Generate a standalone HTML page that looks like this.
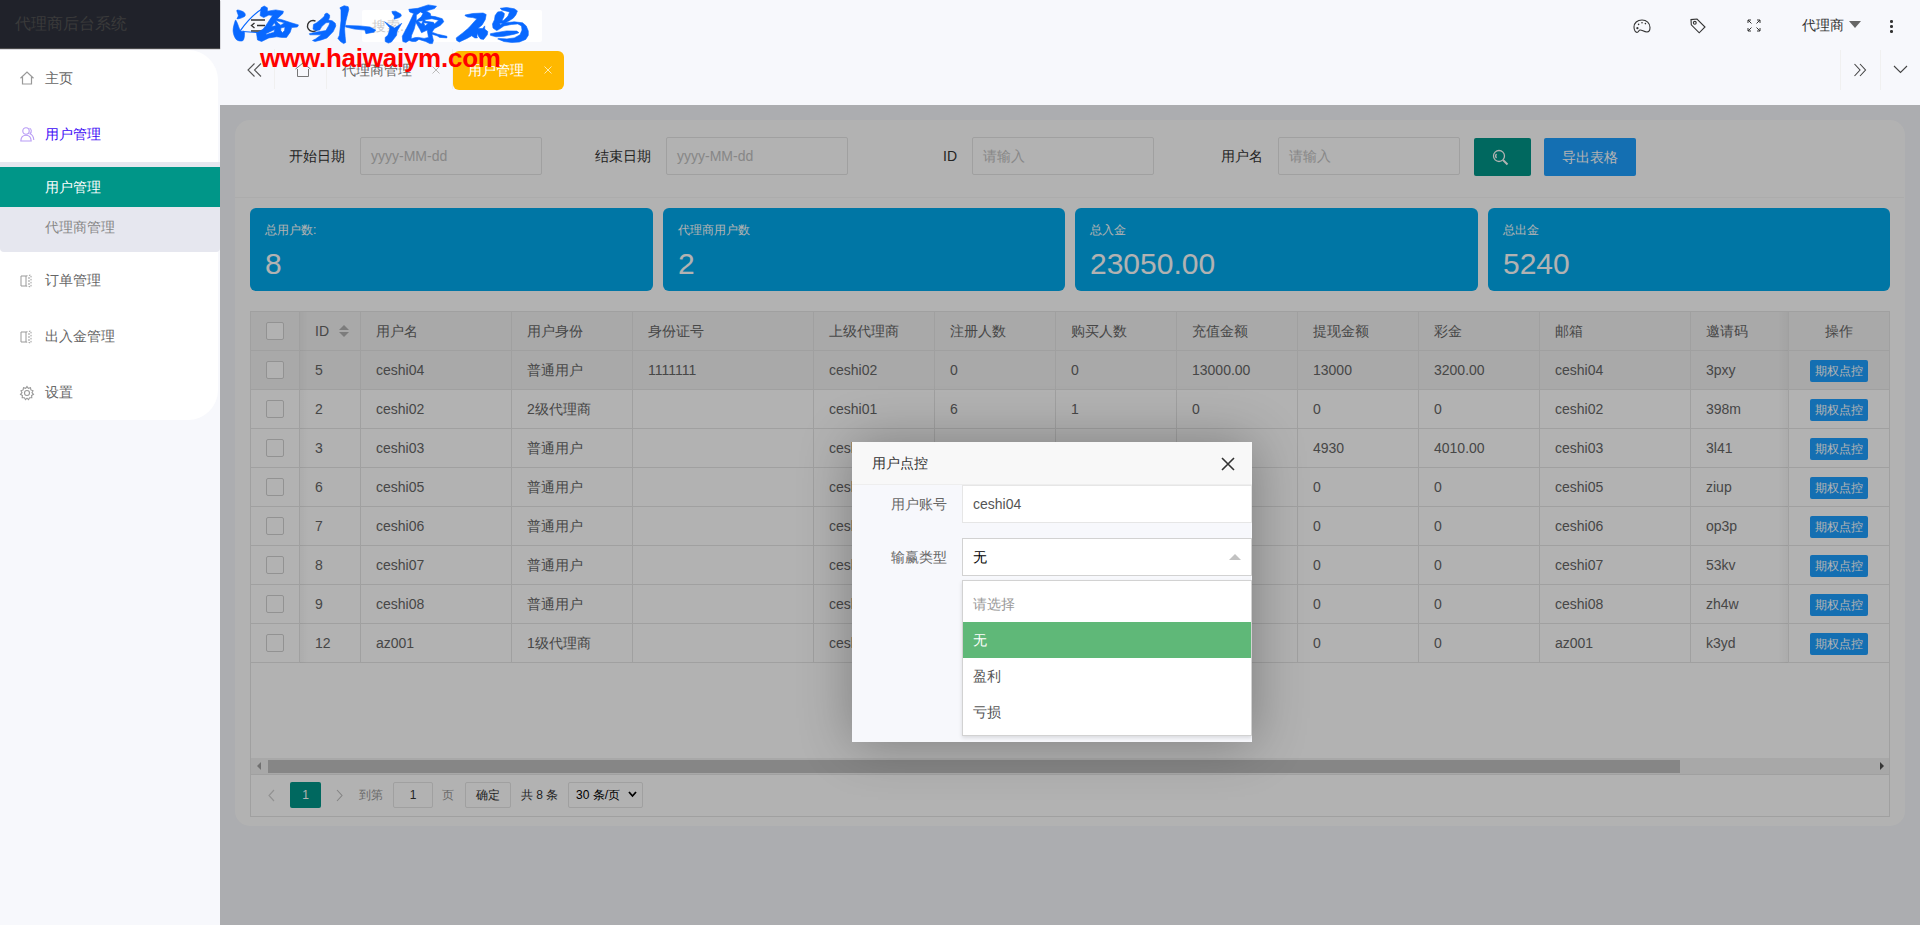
<!DOCTYPE html>
<html><head><meta charset="utf-8">
<style>
*{box-sizing:border-box;margin:0;padding:0}
html,body{width:1920px;height:925px;overflow:hidden}
body{position:relative;background:#f7f8fc;font-family:"Liberation Sans",sans-serif;font-size:14px;color:#333}
.a{position:absolute;white-space:nowrap}
#logo{left:0;top:0;width:220px;height:48px;background:#20222a;box-shadow:0 1px 1px rgba(0,0,0,.7)}
#logo span{position:absolute;left:15px;top:13px;font-size:16px;line-height:22px;color:#3a3a3a;font-weight:500}
#menu{left:0;top:50px;width:218px;height:370px;background:#fff;border-radius:0 30px 30px 0}
.mi{position:absolute;left:45px;font-size:14px;color:#666;line-height:20px}
#sub{left:0;top:162px;width:220px;height:90px;background:#e6e7ef;border-radius:0 0 4px 4px}
#subact{left:0;top:167px;width:220px;height:40px;background:#009688}
#main{left:220px;top:105px;width:1700px;height:820px;background:#f7f8fc}
#card{left:235px;top:120px;width:1670px;height:706px;background:#fff;border-radius:15px}
.lbl{font-size:14px;color:#333;line-height:20px}
.inp{height:38px;border:1px solid #e6e6e6;background:#fff;border-radius:2px;color:#c2c2c2;font-size:14px;line-height:36px;padding-left:10px}
.stat{top:208px;height:83px;background:#01aaed;border-radius:6px;color:#fff}
.stat .t{position:absolute;left:15px;top:13px;font-size:12px;line-height:18px}
.stat .v{position:absolute;left:15px;top:36px;font-size:30px;line-height:40px}
.hl{left:251px;width:1638px;height:1px;background:#e6e6e6}
.vl{top:312px;width:1px;height:350px;background:#e6e6e6}
.th,.td{font-size:14px;color:#666;line-height:20px}
.cb{width:18px;height:18px;border:1px solid #d2d2d2;background:#fff;border-radius:2px}
.btn{width:58px;height:22px;background:#1e9fff;color:#fff;font-size:12px;line-height:22px;text-align:center;border-radius:2px}
#shade{left:220px;top:105px;width:1700px;height:820px;background:rgba(0,0,0,.3)}
.sep{width:1px;height:40px;background:#f0f0f0}
svg{position:absolute;overflow:visible}
</style></head><body>
<div class="a" id="logo"><span>代理商后台系统</span></div>
<div class="a" id="menu"></div>
<div class="a" id="sub"></div>
<div class="a" id="subact"></div>
<div class="a mi" style="top:68px">主页</div>
<div class="a mi" style="top:124px;color:#3c0af5">用户管理</div>
<div class="a mi" style="top:177px;color:#fff">用户管理</div>
<div class="a mi" style="top:217px;color:#888">代理商管理</div>
<div class="a mi" style="top:270px">订单管理</div>
<div class="a mi" style="top:326px">出入金管理</div>
<div class="a mi" style="top:382px">设置</div>
<!-- sidebar icons -->
<svg style="left:19px;top:70px" width="16" height="16" viewBox="0 0 16 16"><path d="M1.5 8.2 L8 2 L14.5 8.2 M3.5 7 V14 H12.5 V7" fill="none" stroke="#999" stroke-width="1.2"/></svg>
<svg style="left:20px;top:126px" width="16" height="16" viewBox="0 0 16 16"><g fill="none" stroke="#b89cf5" stroke-width="1.1"><circle cx="6" cy="5" r="3.2"/><path d="M0.8 15 C1 11 3 9.2 6 9.2 C9 9.2 11 11 11.2 15 Z"/><path d="M9.5 2.2 C11.5 2.6 12 6 10 7.8 C12.5 8.8 13.6 11 13.8 14"/></g></svg>
<svg style="left:19px;top:273px" width="16" height="16" viewBox="0 0 16 16"><g fill="none" stroke="#999" stroke-width="1"><path d="M2 3 H7 V13 H2 Z"/><path d="M7 3 L12 2 V14 L7 13" stroke-dasharray="1.5 1.5"/><path d="M9 5 H11 M9 8 H11 M9 11 H11"/></g></svg>
<svg style="left:19px;top:329px" width="16" height="16" viewBox="0 0 16 16"><g fill="none" stroke="#999" stroke-width="1"><path d="M2 3 H7 V13 H2 Z"/><path d="M7 3 L12 2 V14 L7 13" stroke-dasharray="1.5 1.5"/><path d="M9 5 H11 M9 8 H11 M9 11 H11"/></g></svg>
<svg style="left:19px;top:385px" width="16" height="16" viewBox="0 0 16 16"><g fill="none" stroke="#999" stroke-width="1.1"><circle cx="8" cy="8" r="2.5"/><path d="M8 1.5 L9.3 3.3 L11.5 2.7 L11.9 4.9 L14 5.7 L13 7.7 L14.5 9.3 L12.6 10.5 L12.8 12.7 L10.6 12.8 L9.5 14.7 L8 13.2 L6.5 14.7 L5.4 12.8 L3.2 12.7 L3.4 10.5 L1.5 9.3 L3 7.7 L2 5.7 L4.1 4.9 L4.5 2.7 L6.7 3.3 Z"/></g></svg>

<!-- header -->
<svg style="left:250px;top:19px" width="16" height="13" viewBox="0 0 16 13"><g fill="none" stroke="#333" stroke-width="1.4"><path d="M1 1 H15 M7 6.5 H15 M1 12 H15"/><path d="M4.5 4 L1.5 6.5 L4.5 9"/></g></svg>
<svg style="left:306px;top:19px" width="14" height="14" viewBox="0 0 14 14"><path d="M12.5 7 A5.5 5.5 0 1 1 9.5 2.1" fill="none" stroke="#333" stroke-width="1.4"/></svg>
<div class="a" style="left:362px;top:10px;width:180px;height:32px;background:#fff;border-radius:2px"></div>
<div class="a" style="left:372px;top:16px;font-size:14px;line-height:20px;color:#ccc">搜索...</div>

<svg style="left:1633px;top:19px" width="18" height="15" viewBox="0 0 18 15"><g fill="none" stroke="#333" stroke-width="1.1"><path d="M9 1 C4.2 1 1 4 1 8 C1 11.5 2.6 13.4 4 13.4 C5.8 13.4 5.4 11 7.2 11 C9.4 11 10.8 13 14 13 C16 13 17 11 17 8.6 C17 4.2 13.6 1 9 1 Z"/></g><g fill="#333"><circle cx="4.4" cy="9.2" r="1.1"/><circle cx="5.6" cy="5.4" r="0.8"/><circle cx="9" cy="3.8" r="0.8"/><circle cx="12.4" cy="4.6" r="0.8"/></g></svg>
<svg style="left:1690px;top:18px" width="16" height="16" viewBox="0 0 16 16"><g fill="none" stroke="#333" stroke-width="1.1"><path d="M1 1.6 L1.3 6.8 L9.2 14.8 L15 9 L7 1 Z"/><circle cx="4.8" cy="4.8" r="1.4"/></g></svg>
<svg style="left:1747px;top:19px" width="14" height="13" viewBox="0 0 14 13"><g fill="none" stroke="#333" stroke-width="1"><path d="M1 4 V1 H4 M1 1 L4.5 4.5 M10 1 H13 V4 M13 1 L9.5 4.5 M1 9 V12 H4 M1 12 L4.5 8.5 M13 9 V12 H10 M13 12 L9.5 8.5"/></g></svg>
<div class="a" style="left:1802px;top:15px;font-size:14px;line-height:20px;color:#333">代理商</div>
<div class="a" style="left:1849px;top:21px;width:0;height:0;border-left:6px solid transparent;border-right:6px solid transparent;border-top:7px solid #666"></div>
<div class="a" style="left:1890px;top:20px;width:2.5px;height:2.5px;background:#333;border-radius:50%"></div>
<div class="a" style="left:1890px;top:25px;width:2.5px;height:2.5px;background:#333;border-radius:50%"></div>
<div class="a" style="left:1890px;top:30px;width:2.5px;height:2.5px;background:#333;border-radius:50%"></div>

<!-- tabs -->
<svg style="left:247px;top:63px" width="15" height="14" viewBox="0 0 15 14"><path d="M7.5 0.5 L1 7 L7.5 13.5 M14 0.5 L7.5 7 L14 13.5" fill="none" stroke="#555" stroke-width="1.1"/></svg>
<div class="a sep" style="left:274px;top:49px"></div>
<svg style="left:295px;top:63px" width="16" height="14" viewBox="0 0 16 14"><path d="M0.5 6 L8 0 L15.5 6 M2.5 6 V13.5 H13.5 V6" fill="none" stroke="#777" stroke-width="1"/></svg>
<div class="a sep" style="left:326px;top:49px"></div>
<div class="a" style="left:342px;top:60px;font-size:14px;line-height:20px;color:#666">代理商管理</div>
<svg style="left:432px;top:66px" width="8" height="8" viewBox="0 0 8 8"><path d="M0.5 0.5 L7.5 7.5 M7.5 0.5 L0.5 7.5" stroke="#bbb" stroke-width="1"/></svg>
<div class="a sep" style="left:452px;top:49px"></div>
<div class="a" style="left:453px;top:51px;width:111px;height:39px;background:#ffb800;border-radius:6px"></div>
<div class="a" style="left:468px;top:60px;font-size:14px;line-height:20px;color:#fff">用户管理</div>
<svg style="left:544px;top:66px" width="8" height="8" viewBox="0 0 8 8"><path d="M0.5 0.5 L7.5 7.5 M7.5 0.5 L0.5 7.5" stroke="#ffe9a8" stroke-width="1"/></svg>
<div class="a sep" style="left:1840px;top:50px"></div>
<svg style="left:1853px;top:63px" width="14" height="14" viewBox="0 0 14 14"><path d="M1.5 1 L7 7 L1.5 13 M7 1 L12.5 7 L7 13" fill="none" stroke="#444" stroke-width="1.1"/></svg>
<div class="a sep" style="left:1880px;top:50px"></div>
<svg style="left:1893px;top:65px" width="15" height="9" viewBox="0 0 15 9"><path d="M1 1 L7.5 7.5 L14 1" fill="none" stroke="#444" stroke-width="1.1"/></svg>

<!-- main -->
<div class="a" id="main"></div>
<div class="a" id="card"></div>
<div class="a" style="left:235px;top:197px;width:1669px;height:1px;background:#f6f6f6"></div>
<div class="a lbl" style="left:289px;top:146px">开始日期</div>
<div class="a inp" style="left:360px;top:137px;width:182px">yyyy-MM-dd</div>
<div class="a lbl" style="left:595px;top:146px">结束日期</div>
<div class="a inp" style="left:666px;top:137px;width:182px">yyyy-MM-dd</div>
<div class="a lbl" style="left:943px;top:146px">ID</div>
<div class="a inp" style="left:972px;top:137px;width:182px">请输入</div>
<div class="a lbl" style="left:1221px;top:146px">用户名</div>
<div class="a inp" style="left:1278px;top:137px;width:182px">请输入</div>
<div class="a" style="left:1474px;top:138px;width:57px;height:38px;background:#009688;border-radius:2px"></div>
<svg style="left:1492px;top:149px" width="18" height="18" viewBox="0 0 18 18"><g fill="none" stroke="#fff" stroke-width="1.3"><circle cx="7" cy="7" r="5.5"/><path d="M11 11 L15.5 15.5" stroke-width="2"/><path d="M4.5 5 A3 3 0 0 0 4.5 9" /></g></svg>
<div class="a" style="left:1544px;top:138px;width:92px;height:38px;background:#1e9fff;border-radius:2px;color:#fff;font-size:14px;line-height:38px;text-align:center">导出表格</div>

<div class="a stat" style="left:250px;width:403px"><span class="t">总用户数:</span><span class="v">8</span></div>
<div class="a stat" style="left:663px;width:402px"><span class="t">代理商用户数</span><span class="v">2</span></div>
<div class="a stat" style="left:1075px;width:403px"><span class="t">总入金</span><span class="v">23050.00</span></div>
<div class="a stat" style="left:1488px;width:402px"><span class="t">总出金</span><span class="v">5240</span></div>
<div class="a" id="tbl" style="left:250px;top:311px;width:1640px;height:506px;border:1px solid #e6e6e6;background:#fff"></div>
<div class="a" style="left:251px;top:312px;width:1638px;height:38px;background:#f2f2f2"></div>
<div class="a" style="left:251px;top:351px;width:1638px;height:38px;background:#f2f2f2"></div>
<div class="a hl" style="top:350px"></div>
<div class="a hl" style="top:389px"></div>
<div class="a hl" style="top:428px"></div>
<div class="a hl" style="top:467px"></div>
<div class="a hl" style="top:506px"></div>
<div class="a hl" style="top:545px"></div>
<div class="a hl" style="top:584px"></div>
<div class="a hl" style="top:623px"></div>
<div class="a hl" style="top:662px"></div>
<div class="a vl" style="left:299px"></div>
<div class="a vl" style="left:360px"></div>
<div class="a vl" style="left:511px"></div>
<div class="a vl" style="left:632px"></div>
<div class="a vl" style="left:813px"></div>
<div class="a vl" style="left:934px"></div>
<div class="a vl" style="left:1055px"></div>
<div class="a vl" style="left:1176px"></div>
<div class="a vl" style="left:1297px"></div>
<div class="a vl" style="left:1418px"></div>
<div class="a vl" style="left:1539px"></div>
<div class="a vl" style="left:1690px"></div>
<div class="a vl" style="left:1788px"></div>
<div class="a th" style="left:315px;top:321px">ID</div>
<div class="a th" style="left:376px;top:321px">用户名</div>
<div class="a th" style="left:527px;top:321px">用户身份</div>
<div class="a th" style="left:648px;top:321px">身份证号</div>
<div class="a th" style="left:829px;top:321px">上级代理商</div>
<div class="a th" style="left:950px;top:321px">注册人数</div>
<div class="a th" style="left:1071px;top:321px">购买人数</div>
<div class="a th" style="left:1192px;top:321px">充值金额</div>
<div class="a th" style="left:1313px;top:321px">提现金额</div>
<div class="a th" style="left:1434px;top:321px">彩金</div>
<div class="a th" style="left:1555px;top:321px">邮箱</div>
<div class="a th" style="left:1706px;top:321px">邀请码</div>
<div class="a th" style="left:1788px;width:101px;text-align:center;top:321px">操作</div>
<div class="a" style="left:339px;top:325px;width:0;height:0;border:5px solid transparent;border-bottom-color:#b2b2b2;border-top-width:0"></div>
<div class="a" style="left:339px;top:332px;width:0;height:0;border:5px solid transparent;border-top-color:#b2b2b2;border-bottom-width:0"></div>
<div class="a cb" style="left:266px;top:361px"></div>
<div class="a td" style="left:315px;top:360px">5</div>
<div class="a td" style="left:376px;top:360px">ceshi04</div>
<div class="a td" style="left:527px;top:360px">普通用户</div>
<div class="a td" style="left:648px;top:360px">1111111</div>
<div class="a td" style="left:829px;top:360px">ceshi02</div>
<div class="a td" style="left:950px;top:360px">0</div>
<div class="a td" style="left:1071px;top:360px">0</div>
<div class="a td" style="left:1192px;top:360px">13000.00</div>
<div class="a td" style="left:1313px;top:360px">13000</div>
<div class="a td" style="left:1434px;top:360px">3200.00</div>
<div class="a td" style="left:1555px;top:360px">ceshi04</div>
<div class="a td" style="left:1706px;top:360px">3pxy</div>
<div class="a btn" style="left:1810px;top:360px">期权点控</div>
<div class="a cb" style="left:266px;top:400px"></div>
<div class="a td" style="left:315px;top:399px">2</div>
<div class="a td" style="left:376px;top:399px">ceshi02</div>
<div class="a td" style="left:527px;top:399px">2级代理商</div>
<div class="a td" style="left:829px;top:399px">ceshi01</div>
<div class="a td" style="left:950px;top:399px">6</div>
<div class="a td" style="left:1071px;top:399px">1</div>
<div class="a td" style="left:1192px;top:399px">0</div>
<div class="a td" style="left:1313px;top:399px">0</div>
<div class="a td" style="left:1434px;top:399px">0</div>
<div class="a td" style="left:1555px;top:399px">ceshi02</div>
<div class="a td" style="left:1706px;top:399px">398m</div>
<div class="a btn" style="left:1810px;top:399px">期权点控</div>
<div class="a cb" style="left:266px;top:439px"></div>
<div class="a td" style="left:315px;top:438px">3</div>
<div class="a td" style="left:376px;top:438px">ceshi03</div>
<div class="a td" style="left:527px;top:438px">普通用户</div>
<div class="a td" style="left:829px;top:438px">ceshi02</div>
<div class="a td" style="left:1313px;top:438px">4930</div>
<div class="a td" style="left:1434px;top:438px">4010.00</div>
<div class="a td" style="left:1555px;top:438px">ceshi03</div>
<div class="a td" style="left:1706px;top:438px">3l41</div>
<div class="a btn" style="left:1810px;top:438px">期权点控</div>
<div class="a cb" style="left:266px;top:478px"></div>
<div class="a td" style="left:315px;top:477px">6</div>
<div class="a td" style="left:376px;top:477px">ceshi05</div>
<div class="a td" style="left:527px;top:477px">普通用户</div>
<div class="a td" style="left:829px;top:477px">ceshi02</div>
<div class="a td" style="left:1313px;top:477px">0</div>
<div class="a td" style="left:1434px;top:477px">0</div>
<div class="a td" style="left:1555px;top:477px">ceshi05</div>
<div class="a td" style="left:1706px;top:477px">ziup</div>
<div class="a btn" style="left:1810px;top:477px">期权点控</div>
<div class="a cb" style="left:266px;top:517px"></div>
<div class="a td" style="left:315px;top:516px">7</div>
<div class="a td" style="left:376px;top:516px">ceshi06</div>
<div class="a td" style="left:527px;top:516px">普通用户</div>
<div class="a td" style="left:829px;top:516px">ceshi02</div>
<div class="a td" style="left:1313px;top:516px">0</div>
<div class="a td" style="left:1434px;top:516px">0</div>
<div class="a td" style="left:1555px;top:516px">ceshi06</div>
<div class="a td" style="left:1706px;top:516px">op3p</div>
<div class="a btn" style="left:1810px;top:516px">期权点控</div>
<div class="a cb" style="left:266px;top:556px"></div>
<div class="a td" style="left:315px;top:555px">8</div>
<div class="a td" style="left:376px;top:555px">ceshi07</div>
<div class="a td" style="left:527px;top:555px">普通用户</div>
<div class="a td" style="left:829px;top:555px">ceshi02</div>
<div class="a td" style="left:1313px;top:555px">0</div>
<div class="a td" style="left:1434px;top:555px">0</div>
<div class="a td" style="left:1555px;top:555px">ceshi07</div>
<div class="a td" style="left:1706px;top:555px">53kv</div>
<div class="a btn" style="left:1810px;top:555px">期权点控</div>
<div class="a cb" style="left:266px;top:595px"></div>
<div class="a td" style="left:315px;top:594px">9</div>
<div class="a td" style="left:376px;top:594px">ceshi08</div>
<div class="a td" style="left:527px;top:594px">普通用户</div>
<div class="a td" style="left:829px;top:594px">ceshi02</div>
<div class="a td" style="left:1313px;top:594px">0</div>
<div class="a td" style="left:1434px;top:594px">0</div>
<div class="a td" style="left:1555px;top:594px">ceshi08</div>
<div class="a td" style="left:1706px;top:594px">zh4w</div>
<div class="a btn" style="left:1810px;top:594px">期权点控</div>
<div class="a cb" style="left:266px;top:634px"></div>
<div class="a td" style="left:315px;top:633px">12</div>
<div class="a td" style="left:376px;top:633px">az001</div>
<div class="a td" style="left:527px;top:633px">1级代理商</div>
<div class="a td" style="left:829px;top:633px">ceshi02</div>
<div class="a td" style="left:1313px;top:633px">0</div>
<div class="a td" style="left:1434px;top:633px">0</div>
<div class="a td" style="left:1555px;top:633px">az001</div>
<div class="a td" style="left:1706px;top:633px">k3yd</div>
<div class="a btn" style="left:1810px;top:633px">期权点控</div>
<div class="a cb" style="left:266px;top:322px"></div>
<div class="a" style="left:1778px;top:312px;width:10px;height:351px;background:linear-gradient(to right,rgba(0,0,0,0),rgba(0,0,0,.035))"></div>
<div class="a" style="left:300px;top:312px;width:8px;height:351px;background:linear-gradient(to left,rgba(0,0,0,0),rgba(0,0,0,.03))"></div><!-- scrollbar & pagination -->
<div class="a" style="left:251px;top:758px;width:1638px;height:16px;background:#f1f1f1"></div>
<div class="a" style="left:268px;top:760px;width:1412px;height:13px;background:#c1c1c1"></div>
<div class="a" style="left:257px;top:762px;width:0;height:0;border-top:4px solid transparent;border-bottom:4px solid transparent;border-right:4px solid #a3a3a3"></div>
<div class="a" style="left:1880px;top:762px;width:0;height:0;border-top:4px solid transparent;border-bottom:4px solid transparent;border-left:4px solid #505050"></div>
<div class="a" style="left:251px;top:774px;width:1638px;height:1px;background:#e6e6e6"></div>
<svg style="left:268px;top:789px" width="7" height="13" viewBox="0 0 7 13"><path d="M6 1 L1 6.5 L6 12" fill="none" stroke="#d2d2d2" stroke-width="1.2"/></svg>
<div class="a" style="left:290px;top:782px;width:31px;height:26px;background:#009688;border-radius:2px;color:#fff;font-size:12px;line-height:26px;text-align:center">1</div>
<svg style="left:336px;top:789px" width="7" height="13" viewBox="0 0 7 13"><path d="M1 1 L6 6.5 L1 12" fill="none" stroke="#bdbdbd" stroke-width="1.1"/></svg>
<div class="a" style="left:359px;top:786px;font-size:12px;line-height:18px;color:#999">到第</div>
<div class="a" style="left:393px;top:782px;width:40px;height:26px;border:1px solid #e6e6e6;background:#fff;border-radius:2px;font-size:12px;line-height:24px;text-align:center;color:#333">1</div>
<div class="a" style="left:442px;top:786px;font-size:12px;line-height:18px;color:#999">页</div>
<div class="a" style="left:465px;top:782px;width:46px;height:26px;border:1px solid #e6e6e6;background:#fff;border-radius:2px;font-size:12px;line-height:24px;text-align:center;color:#333">确定</div>
<div class="a" style="left:521px;top:786px;font-size:12px;line-height:18px;color:#333">共 8 条</div>
<div class="a" style="left:568px;top:782px;width:75px;height:26px;border:1px solid #e6e6e6;background:#fff;border-radius:2px;font-size:12px;line-height:24px;color:#000;padding-left:7px">30 条/页</div>
<svg style="left:628px;top:791px" width="9" height="7" viewBox="0 0 9 7"><path d="M1 1 L4.5 5 L8 1" fill="none" stroke="#000" stroke-width="1.8"/></svg>

<div class="a" id="shade"></div>

<!-- modal -->
<div class="a" id="modal" style="left:852px;top:442px;width:400px;height:300px;background:#f7f8fc;box-shadow:1px 1px 50px rgba(0,0,0,.3);overflow:hidden">
  <div class="a" style="left:0;top:0;width:400px;height:43px;background:#f8f8f8;border-bottom:1px solid #eee"></div>
  <div class="a" style="left:20px;top:11px;font-size:14px;line-height:20px;color:#333">用户点控</div>
  <svg style="left:369px;top:15px" width="14" height="14" viewBox="0 0 14 14"><path d="M1 1 L13 13 M13 1 L1 13" stroke="#333" stroke-width="1.6"/></svg>
  <div class="a" style="left:39px;top:52px;font-size:14px;line-height:20px;color:#666">用户账号</div>
  <div class="a" style="left:110px;top:43px;width:290px;height:38px;border:1px solid #e6e6e6;background:#fff;font-size:14px;line-height:36px;padding-left:10px;color:#555">ceshi04</div>
  <div class="a" style="left:39px;top:105px;font-size:14px;line-height:20px;color:#666">输赢类型</div>
  <div class="a" style="left:110px;top:96px;width:290px;height:38px;border:1px solid #d2d2d2;background:#fff;font-size:14px;line-height:36px;padding-left:10px;color:#000">无</div>
  <div class="a" style="left:377px;top:112px;width:0;height:0;border-left:6px solid transparent;border-right:6px solid transparent;border-bottom:6px solid #c2c2c2"></div>
  <div class="a" style="left:110px;top:138px;width:290px;height:156px;border:1px solid #d2d2d2;background:#fff;box-shadow:0 2px 4px rgba(0,0,0,.12)">
    <div class="a" style="left:10px;top:13px;font-size:14px;line-height:20px;color:#999">请选择</div>
    <div class="a" style="left:0;top:41px;width:288px;height:36px;background:#5fb878"></div>
    <div class="a" style="left:10px;top:49px;font-size:14px;line-height:20px;color:#fff">无</div>
    <div class="a" style="left:10px;top:85px;font-size:14px;line-height:20px;color:#555">盈利</div>
    <div class="a" style="left:10px;top:121px;font-size:14px;line-height:20px;color:#555">亏损</div>
  </div>
</div>

<!-- watermark -->
<svg style="left:0;top:0" width="600" height="50" viewBox="0 0 600 50">
<g fill="#0868ff" fill-rule="evenodd" stroke="#0868ff" stroke-width="0.6" stroke-linejoin="round">
<path d="M237.0 10.1 C237.9 9.5 242.1 11.1 243.5 11.9 C244.9 12.7 245.3 14.1 245.3 15.0 C245.3 15.9 244.8 16.5 243.5 17.1 C242.2 17.8 238.2 19.1 237.3 18.9 C236.4 18.6 238.4 17.1 238.3 15.6 C238.2 14.1 236.1 10.7 237.0 10.1 Z"/>
<path d="M235.2 20.8 C234.6 22.4 232.9 28.0 233.1 31.1 C233.3 34.2 234.7 37.8 236.2 39.4 C237.7 41.0 240.6 41.2 241.9 41.0 C243.2 40.8 243.6 39.7 244.0 38.4 C244.4 37.1 244.6 34.4 244.5 33.2 C244.4 32.0 244.2 31.5 243.5 31.1 C242.8 30.7 241.5 32.1 240.4 30.6 C239.3 29.1 237.6 23.4 236.7 21.8 C235.8 20.2 235.8 19.2 235.2 20.8 Z"/>
<path d="M261.1 7.8 L264.2 6.0 L267.4 7.8 L267.4 11.2 L275.7 9.9 L283.4 11.2 L282.9 13.5 L277.2 18.7 L281.9 19.7 L291.2 22.8 L298.5 24.9 L297.4 27.0 L291.7 27.5 L290.2 32.2 L286.5 37.4 L281.9 37.4 L276.7 36.8 L268.9 37.9 L261.6 41.5 L257.5 39.9 L256.5 33.2 L263.2 29.1 L266.3 24.9 L272.5 15.6 L268.9 15.0 L263.7 17.6 L260.1 15.6 L260.6 11.4 Z M275.7 20.5 L284.5 22.8 L280.8 25.2 L278.2 23.3 Z M271.5 26.5 L274.6 22.8 L275.7 25.7 Z M265.8 33.7 L274.6 29.6 L274.1 32.2 L266.3 34.5 Z M280.8 28.0 L285.0 27.0 L284.5 30.6 L282.4 32.7 L280.8 30.6 Z"/>
<path d="M324.9 14.0 L327.0 13.0 L329.6 15.0 L329.6 17.6 L328.3 20.0 L332.2 20.8 L335.3 23.3 L335.8 25.9 L333.2 31.6 L327.0 37.9 L321.3 39.9 L315.0 41.5 L312.5 40.5 L315.6 38.9 L321.3 34.8 L309.9 34.8 L309.3 33.7 L315.6 32.2 L325.9 30.6 L329.1 24.9 L329.6 22.3 L325.9 22.8 L321.8 26.5 L319.7 30.1 L315.6 30.6 L313.0 29.1 L313.5 24.4 L316.6 22.8 L321.8 18.7 L324.4 16.1 Z"/>
<path d="M339.9 7.8 L344.1 5.7 L348.2 6.7 L348.8 9.3 L345.7 21.8 L344.6 29.1 L345.1 36.3 L345.7 42.5 L343.6 43.6 L340.5 41.5 L337.9 38.4 L339.4 35.3 L341.0 20.8 L341.0 9.9 Z"/>
<path d="M345.7 25.4 L359.7 25.9 L370.0 27.0 L375.7 30.1 L373.7 32.2 L365.9 33.7 L364.9 30.1 L354.5 29.1 L345.7 27.0 Z"/>
<path d="M391.9 11.4 L395.6 11.2 L400.8 14.0 L401.3 16.1 L399.2 17.6 L394.0 19.2 L394.5 16.1 L392.5 13.5 Z"/>
<path d="M384.7 21.8 L389.3 24.9 L394.5 28.0 L401.8 23.3 L397.1 31.1 L396.6 35.3 L391.4 42.0 L388.3 43.1 L385.2 41.5 L385.2 37.4 L387.8 35.3 L389.3 31.1 L389.9 28.0 Z"/>
<path d="M408.8 9.3 L417.9 8.3 L428.2 4.9 L436.5 6.2 L434.5 8.6 L426.2 10.9 L430.3 13.5 L430.8 16.1 L435.0 16.6 L442.3 18.7 L443.8 21.8 L440.2 25.4 L434.5 28.5 L431.9 32.2 L437.6 34.2 L446.9 36.3 L446.9 37.9 L439.7 37.4 L437.1 35.8 L431.9 34.2 L433.4 40.5 L432.4 43.6 L429.8 43.6 L425.7 41.5 L418.9 39.4 L415.8 41.5 L412.2 41.5 L409.1 40.5 L405.9 42.5 L402.8 41.5 L402.3 36.3 L403.9 33.2 L409.1 23.3 L413.7 13.5 L409.6 11.9 Z M416.3 15.0 L420.5 11.9 L423.1 13.5 L421.0 17.1 L416.3 20.8 Z M417.9 21.3 L423.1 20.8 L421.5 23.9 Z M423.6 22.8 L428.2 23.3 L425.1 25.9 Z M424.6 19.7 L431.9 18.7 L438.6 20.2 L434.5 23.9 L433.4 22.3 L425.7 21.3 Z M415.8 22.3 L420.0 29.6 L421.5 32.7 L427.2 30.1 L428.5 37.4 L424.1 38.4 L418.4 37.4 L415.3 37.6 L411.1 38.7 L411.6 35.3 L414.2 29.1 Z"/>
<path d="M465.0 15.0 L472.8 13.5 L483.1 13.0 L486.2 14.5 L485.2 19.7 L482.1 24.9 L477.9 28.5 L482.6 28.5 L484.7 25.9 L484.7 29.1 L487.8 31.6 L487.3 34.8 L483.6 39.4 L480.5 38.9 L478.5 36.3 L477.4 33.2 L476.9 36.3 L477.4 37.9 L474.8 37.9 L471.7 35.8 L467.0 38.4 L459.3 42.0 L456.7 40.5 L456.2 37.9 L462.4 33.2 L468.6 28.0 L476.9 18.7 L472.8 17.6 L467.6 17.1 L465.0 15.6 Z"/>
<path d="M500.2 8.3 L506.5 7.5 L514.3 8.8 L517.4 10.9 L515.8 15.0 L513.2 18.2 L509.1 20.8 L505.4 22.8 L514.3 21.8 L522.6 22.8 L526.2 25.9 L528.3 31.1 L528.3 35.3 L525.7 39.4 L519.4 42.0 L511.7 42.5 L503.9 41.5 L497.7 38.9 L498.7 38.4 L507.0 38.9 L514.3 37.9 L520.0 34.8 L522.0 30.1 L521.5 25.9 L517.9 23.9 L511.7 24.4 L503.9 25.9 L498.7 29.6 L496.6 30.6 L493.0 28.0 L492.5 23.9 L494.5 19.7 L495.1 15.6 L497.7 11.9 L501.8 11.4 L504.4 13.5 L503.9 16.6 L501.8 20.8 L503.9 20.2 L508.0 16.1 L509.6 11.9 L501.8 9.9 Z M499.7 23.3 L502.8 23.3 L500.2 24.9 Z"/>
<path d="M490.4 33.7 L498.7 32.2 L506.5 30.9 L516.9 31.1 L518.9 32.7 L514.3 34.2 L503.9 36.3 L496.1 36.8 L490.4 35.3 Z"/>
</g>
<path d="M240.4 30.6 C248 20 255 13 263.2 8.3" fill="none" stroke="#0868ff" stroke-width="1.2"/>
<path d="M244 31.6 L259 32.7" fill="none" stroke="#0868ff" stroke-width="1"/>
</svg>

<div class="a" style="left:260px;top:43px;font-size:26px;line-height:30px;font-weight:bold;color:#ff0000;letter-spacing:-0.25px">www.haiwaiym.com</div>
</body></html>
